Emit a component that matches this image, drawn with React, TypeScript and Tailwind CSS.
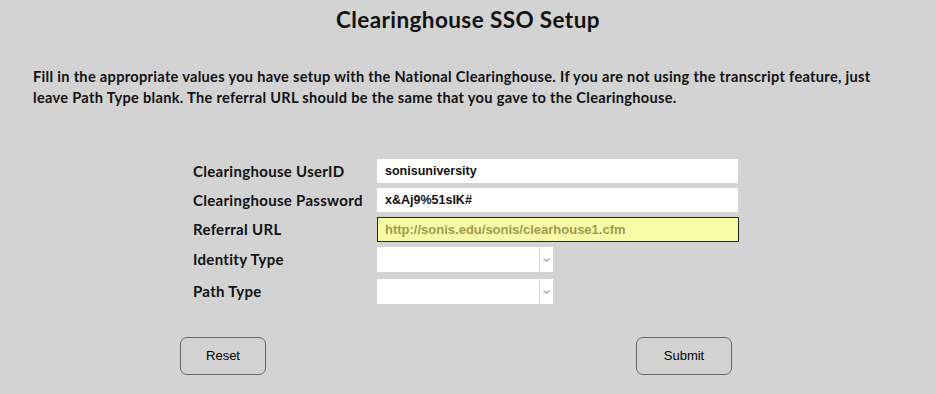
const gothic = "font-['Lato',sans-serif]";

function Chevron() {
  return (
    <svg width="7" height="4" viewBox="0 0 7 4" className="text-[#a8a8a8]">
      <path d="M0.5 0.5 L3.5 3.5 L6.5 0.5" fill="none" stroke="currentColor" strokeWidth="1.2" />
    </svg>
  );
}

function Select() {
  return (
    <div className="flex h-[25px] w-[176px] bg-white">
      <div className="flex-1" />
      <div className="flex w-[14px] items-center justify-center border-l border-[#d8d8d8]">
        <Chevron />
      </div>
    </div>
  );
}

function Row({ label, children }: { label: string; children: React.ReactNode }) {
  return (
    <div className="flex items-center">
      <div className={`w-[184px] whitespace-nowrap text-[15px] font-bold tracking-[0.3px] text-[#111] ${gothic}`}>
        {label}
      </div>
      {children}
    </div>
  );
}

export default function App() {
  return (
    <div className="h-[394px] w-[936px] bg-[#d3d3d3] font-['Liberation_Sans',Arial,sans-serif]">
      <h1 className={`pt-[7px] text-center text-[22.5px] font-bold leading-[26px] tracking-[0.4px] text-[#111] ${gothic}`}>
        Clearinghouse SSO Setup
      </h1>
      <p className={`mt-[33px] whitespace-nowrap px-[33px] text-[14.6px] font-bold leading-[21px] tracking-[0.3px] text-[#111] ${gothic}`}>
        Fill in the appropriate values you have setup with the National Clearinghouse. If you are not using the
        transcript feature, just
        <br />
        leave Path Type blank. The referral URL should be the same that you gave to the Clearinghouse.
      </p>
      <div className="ml-[193px] mt-[51px] flex flex-col gap-[5px]">
        <Row label="Clearinghouse UserID">
          <div className="flex h-[24px] w-[361px] items-center bg-white px-[8px] text-[12.5px] font-bold text-[#111]">
            sonisuniversity
          </div>
        </Row>
        <Row label="Clearinghouse Password">
          <div className="flex h-[24px] w-[361px] items-center bg-white px-[8px] text-[12.5px] font-bold text-[#111]">
            x&amp;Aj9%51sIK#
          </div>
        </Row>
        <Row label="Referral URL">
          <div className="flex h-[25px] w-[362px] items-center border border-[#222] bg-[#f8fba6] px-[7px] text-[13px] font-bold text-[#9c9a52]">
            http://sonis.edu/sonis/clearhouse1.cfm
          </div>
        </Row>
        <Row label="Identity Type">
          <Select />
        </Row>
        <div className="mt-[2px]">
          <Row label="Path Type">
            <Select />
          </Row>
        </div>
      </div>
      <div className="mt-[33px] flex">
        <button className="ml-[180px] h-[38px] w-[86px] rounded-[7px] border border-[#666] text-[13px] text-black">
          Reset
        </button>
        <button className="ml-[370px] h-[38px] w-[96px] rounded-[7px] border border-[#666] text-[13px] text-black">
          Submit
        </button>
      </div>
    </div>
  );
}
